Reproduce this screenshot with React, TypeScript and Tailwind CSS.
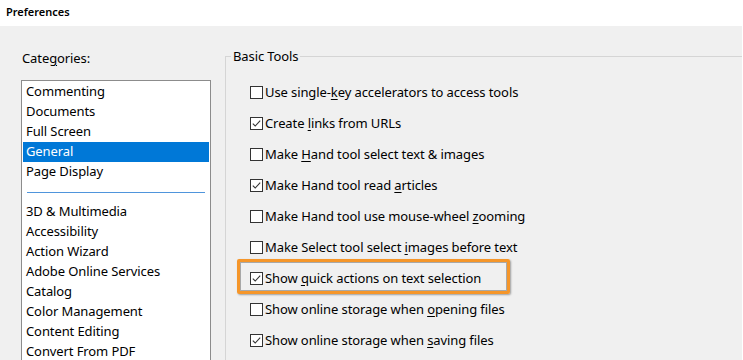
import React from "react";

type Row = { pre: string; key: string; post: string; checked: boolean; hl?: boolean };

const rows: Row[] = [
  { pre: "Use single-", key: "k", post: "ey accelerators to access tools", checked: false },
  { pre: "Create ", key: "l", post: "inks from URLs", checked: true },
  { pre: "Make ", key: "H", post: "and tool select text & images", checked: false },
  { pre: "Make Hand tool read ", key: "a", post: "rticles", checked: true },
  { pre: "Make Hand tool use mouse-wheel ", key: "z", post: "ooming", checked: false },
  { pre: "Make Select tool select ", key: "i", post: "mages before text", checked: false },
  { pre: "Show ", key: "q", post: "uick actions on text selection", checked: true, hl: true },
  { pre: "Show online storage when ", key: "o", post: "pening files", checked: false },
  { pre: "Show online storage when ", key: "s", post: "aving files", checked: true },
];

const cats1 = ["Commenting", "Documents", "Full Screen", "General", "Page Display"];
const cats2 = [
  "3D & Multimedia",
  "Accessibility",
  "Action Wizard",
  "Adobe Online Services",
  "Catalog",
  "Color Management",
  "Content Editing",
  "Convert From PDF",
];

function Check({ checked }: { checked: boolean }) {
  return (
    <div className="w-[13px] h-[13px] border border-[#333333] bg-white shrink-0 flex items-center justify-center">
      {checked && (
        <svg width="11" height="11" viewBox="0 0 11 11">
          <path d="M1.8 5.6 L4.2 8 L9.2 2.6" fill="none" stroke="#333333" strokeWidth="1.1" />
        </svg>
      )}
    </div>
  );
}

export default function App() {
  return (
    <div className="w-[743px] h-[360px] overflow-hidden bg-white flex flex-col font-['Noto_Sans',sans-serif] text-black">
      <div className="h-[26px] shrink-0 flex items-center pl-[6px] pb-[1px] text-[11px] font-semibold">Preferences</div>
      <div className="flex-1 bg-[#f0f0f0] mr-[1px] flex min-h-0 overflow-hidden">
        {/* left column */}
        <div className="w-[225px] shrink-0 pl-[21px] pt-[26px] flex flex-col">
          <div className="h-[20px] flex items-center pl-[1px] text-[13px] tracking-[-0.1px] leading-none">
            Cate<span className="underline underline-offset-2">g</span>ories:
          </div>
          <div className="mt-[15px] w-[190px] border border-[#8c8c8c] bg-white p-[1px] pb-0 flex-1">
            {cats1.map((c) => (
              <div
                key={c}
                className={
                  c === "General"
                    ? "h-[20px] flex items-center pl-[3px] text-[13px] tracking-[-0.1px] bg-[#0078d7] text-white"
                    : "h-[20px] flex items-center pl-[3px] text-[13px] tracking-[-0.1px]"
                }
              >
                {c}
              </div>
            ))}
            <div className="h-[20px] flex items-center px-[4px]">
              <div className="h-[1px] w-full bg-[#4f95dc]" />
            </div>
            {cats2.map((c) => (
              <div key={c} className="h-[20px] flex items-center pl-[3px] text-[13px] tracking-[-0.1px]">
                {c}
              </div>
            ))}
          </div>
        </div>
        {/* right group */}
        <div className="flex-1 pt-[30px] relative">
          <div className="h-full border-l border-t border-[#d5d5d5] relative">
            <div className="absolute left-[5px] top-[-10px] px-[2px] bg-[#f0f0f0] h-[20px] flex items-center text-[13px] tracking-[-0.1px]">
              Basic Tools
            </div>
            <div className="pt-[20px] pl-[24px] flex flex-col">
              {rows.map((r, i) => (
                <div key={i} className="h-[31px] flex items-center relative">
                  {r.hl && (
                    <div className="absolute left-[-13px] top-[-4px] w-[273px] h-[35px] border-[3px] border-[#f5962a] rounded-[2px] shadow-[inset_0_0_0_1px_rgba(110,110,110,0.55),1px_1px_2px_rgba(0,0,0,0.35)]" />
                  )}
                  <Check checked={r.checked} />
                  <div className="ml-[2px] text-[13px] tracking-[-0.1px] whitespace-nowrap leading-none">
                    {r.pre}
                    <span className="underline underline-offset-2">{r.key}</span>
                    {r.post}
                  </div>
                </div>
              ))}
            </div>
          </div>
        </div>
      </div>
    </div>
  );
}
